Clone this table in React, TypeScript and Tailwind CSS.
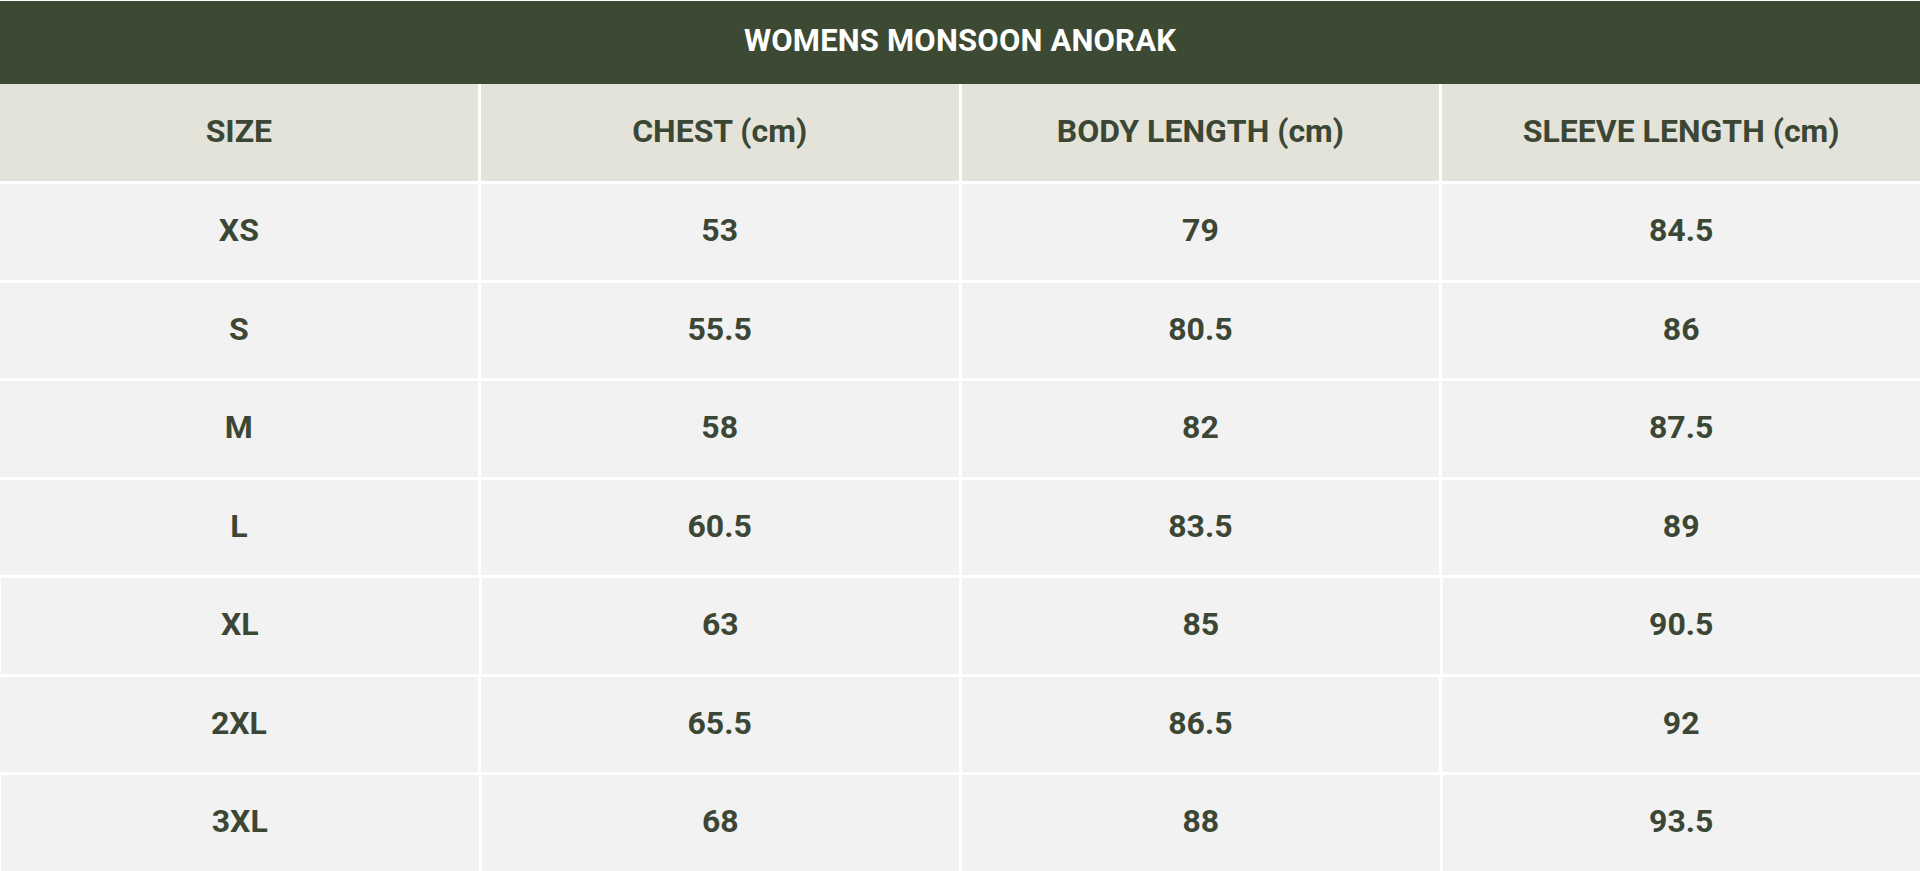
const HEAD = ["SIZE", "CHEST (cm)", "BODY LENGTH (cm)", "SLEEVE LENGTH (cm)"];

const ROWS = [
  ["XS", "53", "79", "84.5"],
  ["S", "55.5", "80.5", "86"],
  ["M", "58", "82", "87.5"],
  ["L", "60.5", "83.5", "89"],
  ["XL", "63", "85", "90.5"],
  ["2XL", "65.5", "86.5", "92"],
  ["3XL", "68", "88", "93.5"],
];

export default function App() {
  return (
    <div
      className="w-[1920px] h-[871px] overflow-hidden bg-white pt-px text-[#3b4734]"
      style={{ fontFamily: "Roboto, 'Liberation Sans', sans-serif" }}
    >
      {/* Title bar */}
      <div className="h-[83px] bg-[#3d4a33] flex items-center justify-center pb-[3px]">
        <h1 className="text-white text-[31px] font-bold tracking-[0.2px]">WOMENS MONSOON ANORAK</h1>
      </div>

      <div className="flex flex-col gap-[3px]">
        {/* Column headers */}
        <div className="grid grid-cols-4 gap-[3px]">
          {HEAD.map((h) => (
            <div
              key={h}
              className="h-[97px] bg-[#e3e3d9] flex items-center justify-center pb-[3px] text-[32px] font-bold"
            >
              {h}
            </div>
          ))}
        </div>

        {ROWS.map((r, i) => (
          <div
            key={r[0]}
            className={`grid grid-cols-4 gap-[3px] ${i === 4 || i === 6 ? "pl-px" : ""}`}
          >
            {r.map((v, j) => (
              <div
                key={j}
                className="h-[95.5px] bg-[#f2f2f2] flex items-center justify-center pb-[3px] text-[32px] font-bold"
              >
                {v}
              </div>
            ))}
          </div>
        ))}
      </div>
    </div>
  );
}
